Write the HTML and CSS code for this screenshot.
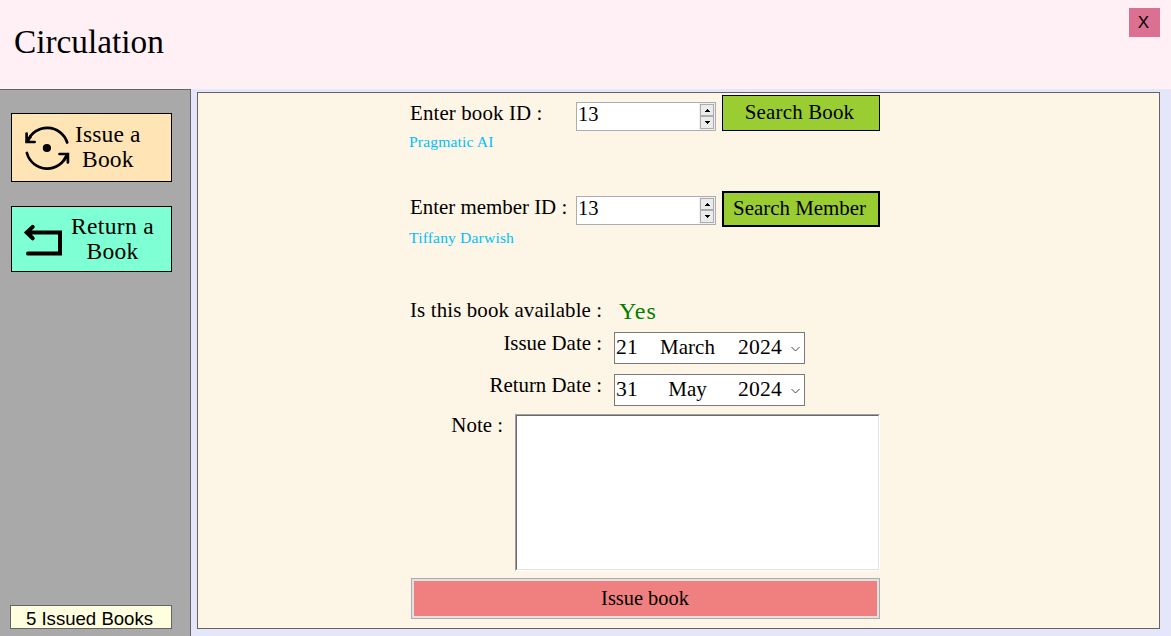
FILE: index.html
```html
<!DOCTYPE html>
<html lang="en">
<head>
<meta charset="utf-8">
<title>Circulation</title>
<link rel="stylesheet" href="styles.css">
</head>
<body>
<header class="header">
  <h1 class="title">Circulation</h1>
  <button class="close">X</button>
</header>
<div class="body">
  <nav class="sidebar">
    <button class="nav nav-issue">
      <svg class="nav-icon" width="46" height="46" viewBox="0 0 46 46" fill="none" stroke="#000" stroke-width="2.7" stroke-linecap="round">
        <path d="M43.2 17.5A21 21 0 0 0 3.5 16.5M2.6 8.5v8.5h8"/>
        <path d="M2.9 28A21 21 0 0 0 43 29.5M35.5 29h8.4v8.5"/>
        <path d="M3 16.500L6.500 12M43.500 29.500L40 35"/>
        <circle cx="22.9" cy="23" r="4.1" fill="#000" stroke="none"/>
      </svg>
      <span class="nav-text">Issue a<br>Book</span>
    </button>
    <button class="nav nav-return">
      <svg class="nav-icon" width="40" height="34" viewBox="0 0 40 34" fill="none" stroke="#000" stroke-width="4" stroke-linecap="round" stroke-linejoin="miter">
        <path d="M5 31.5H37V10.5H3.5M9.7 4.9L3.8 10.5l5.9 5.8"/>
      </svg>
      <span class="nav-text">Return a<br>Book</span>
    </button>
    <div class="counter">5 Issued Books</div>
  </nav>
  <main class="panel">
    <form class="form">
      <div class="search-row">
        <label class="label wide">Enter book ID :</label>
        <div class="number"><span class="value">13</span>
          <span class="spinner"><i class="step"><svg width="5" height="3"><path d="M2 0h1v1h1v1h1v1H0V2h1V1h1z"/></svg></i><i class="step"><svg width="5" height="3"><path d="M0 0h5v1H4v1H3v1H2V2H1V1H0z"/></svg></i></span>
        </div>
        <button class="search wide" type="button">Search Book</button>
      </div>
      <div class="found">Pragmatic AI</div>
      <div class="search-row member">
        <label class="label">Enter member ID :</label>
        <div class="number"><span class="value">13</span>
          <span class="spinner"><i class="step"><svg width="5" height="3"><path d="M2 0h1v1h1v1h1v1H0V2h1V1h1z"/></svg></i><i class="step"><svg width="5" height="3"><path d="M0 0h5v1H4v1H3v1H2V2H1V1H0z"/></svg></i></span>
        </div>
        <button class="search focused" type="button">Search Member</button>
      </div>
      <div class="found found-member">Tiffany Darwish</div>
      <div class="detail availability">
        <span class="label wide">Is this book available :</span><span class="yes">Yes</span>
      </div>
      <div class="detail">
        <label class="label">Issue Date :</label>
        <div class="date"><span>21</span><span class="month">March</span><span>2024</span><svg class="chevron" width="9" height="6" viewBox="0 0 9 6"><path d="M.5 1l4 4 4-4"/></svg></div>
      </div>
      <div class="detail">
        <label class="label">Return Date :</label>
        <div class="date"><span>31</span><span class="month">May</span><span>2024</span><svg class="chevron" width="9" height="6" viewBox="0 0 9 6"><path d="M.5 1l4 4 4-4"/></svg></div>
      </div>
      <div class="note-row">
        <label class="label">Note :</label>
        <div class="note"><div class="note-inner"></div></div>
      </div>
      <button class="submit" type="button"><span>Issue book</span></button>
    </form>
  </main>
</div>
</body>
</html>
```
FILE: styles.css
```css
* { box-sizing: border-box; }
body {
  margin: 0;
  height: 636px;
  overflow: hidden;
  display: flex;
  flex-direction: column;
  background: #e6e6fa;
  color: #000;
  font: 20.9px/24px "Liberation Serif", "Times New Roman", serif;
}
button { font: inherit; color: inherit; padding: 0; border-radius: 0; }
.header {
  height: 89px;
  display: flex;
  justify-content: space-between;
  align-items: flex-start;
  padding: 8px 11px 0 14px;
  background: #fff0f5;
}
.title { margin: 15px 0 0; font-size: 33.3px; line-height: 38px; font-weight: 400; }
.close {
  width: 31px;
  height: 29px;
  border: 0;
  background: #db7093;
  font: 17px/29px "Liberation Sans", Arial, sans-serif;
  padding-right: 2px;
}
.body { flex: 1; display: flex; }
.sidebar {
  width: 191px;
  padding: 23px 18px 7px 11px;
  display: flex;
  flex-direction: column;
  background: #a9a9a9;
  border: solid #646464;
  border-width: 1px 1px 0 0;
}
.nav {
  width: 161px;
  border: 1px solid #000;
  display: flex;
  align-items: center;
  font-size: 23.5px;
  line-height: 25px;
  text-align: center;
}
.nav-issue { height: 69px; padding-left: 12px; gap: 5px; background: #ffe4b5; letter-spacing: .15px; }
.nav-issue .nav-text { padding-bottom: 2px; }
.nav-return { height: 66px; padding-left: 11px; gap: 8px; margin-top: 24px; background: #7fffd4; letter-spacing: .35px; }
.nav-text { white-space: nowrap; }
.counter {
  width: 162px;
  height: 24px;
  margin: auto 0 0 -1px;
  padding-right: 3px;
  border: 1px solid #646464;
  background: #ffffe0;
  text-align: center;
  font: 18.6px/25px "Liberation Sans", Arial, sans-serif;
}
.panel {
  width: 963px;
  height: 537px;
  margin: 3px 0 0 6px;
  border: 1px solid #646464;
  background: #fdf5e6;
  padding: 2px 0 0 212px;
}
.form { width: 470px; }
.label { white-space: nowrap; }
.wide { letter-spacing: .13px; }
.search-row { display: flex; align-items: flex-start; height: 36px; }
.search-row .label { width: 166px; padding-top: 6px; }
.number {
  width: 140px;
  height: 29px;
  margin: 7px 6px 0 0;
  border: 1px solid #abadb3;
  background: #fff;
  display: flex;
  justify-content: space-between;
}
.value { padding-left: 1px; line-height: 23px; font-size: 20.5px; }
.spinner {
  width: 16px;
  padding: 1px;
  background: #f0f0f0;
  display: flex;
  flex-direction: column;
}
.step {
  width: 14px;
  height: 12px;
  border: 1px solid #acacac;
  background: #ebebeb;
  display: flex;
  align-items: center;
  justify-content: center;
}
.step + .step { height: 13px; }
.search {
  width: 158px;
  height: 36px;
  border: 1px solid #000;
  background: #9acd32;
  padding: 0 3px 2px 0;
}
.search.wide { letter-spacing: .2px; }
.search.focused { border-width: 2px; }
.found { height: 60px; padding-top: 1px; margin-left: -1px; font-size: 15.6px; letter-spacing: .16px; line-height: 20px; color: #00bfff; }
.search-row.member .label { padding-top: 4px; }
.search-row.member .number { margin-top: 5px; }
.found-member { height: 71px; }
.detail { display: flex; height: 42px; }
.detail .label { width: 192px; margin-right: 12px; text-align: right; margin-top: -1px; }
.detail .label.wide { margin-top: 0; }
.availability { height: 34px; }
.yes { font-size: 24px; line-height: 26px; padding-left: 5px; letter-spacing: .9px; color: #008000; }
.date {
  width: 191px;
  height: 32px;
  border: 1px solid #7a7a7a;
  background: #fff;
  display: flex;
  align-items: center;
  padding: 0 4px 2px 1px;
}
.date span { width: 43px; font-size: 21.6px; letter-spacing: .2px; }
.date .month { width: 57px; margin: 0 22px 0 0; text-align: center; font-size: 21px; letter-spacing: 0; }
.chevron { fill: none; stroke: #444; margin: 4px 0 0 auto; }
.note-row { display: flex; height: 164px; margin-top: -2px; }
.note-row .label { width: 93px; margin-right: 12px; text-align: right; margin-top: -1px; }
.note { width: 365px; height: 157px; border: 1px solid; border-color: #a0a0a0 #fff #fff #a0a0a0; }
.note-inner { height: 100%; background: #fff; border: 1px solid; border-color: #696969 #e3e3e3 #e3e3e3 #696969; }
.submit {
  display: block;
  width: 469px;
  height: 41px;
  margin-left: 1px;
  border: 1px solid #adadad;
  padding: 2px;
  background: #e1e1e1;
}
.submit span { display: block; padding-right: 1px; line-height: 35px; font-size: 20.4px; background: #f08080; }
```
